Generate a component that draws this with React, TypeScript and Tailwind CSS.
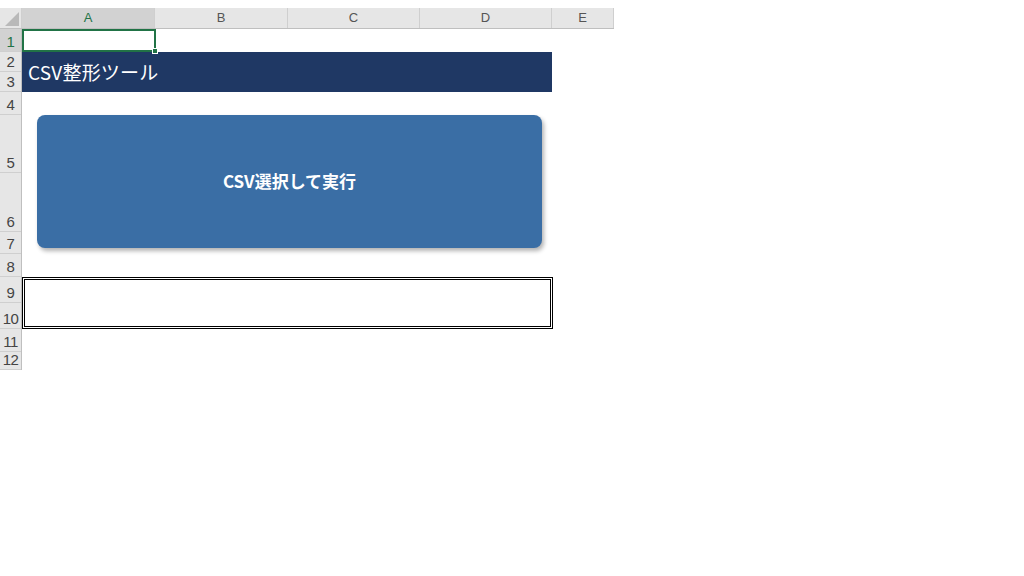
import React from 'react';

const rows = [
  { n: 1, h: 'h-[23px]', active: true },
  { n: 2, h: 'h-[20px]' },
  { n: 3, h: 'h-[20px]' },
  { n: 4, h: 'h-[23px]' },
  { n: 5, h: 'h-[58px]' },
  { n: 6, h: 'h-[59px]' },
  { n: 7, h: 'h-[22px]' },
  { n: 8, h: 'h-[23px]' },
  { n: 9, h: 'h-[26px]' },
  { n: 10, h: 'h-[26px]' },
  { n: 11, h: 'h-[23px]' },
  { n: 12, h: 'h-[18px]' },
];

const cols = [
  { name: 'A', w: 'w-[133px]', active: true },
  { name: 'B', w: 'w-[133px]' },
  { name: 'C', w: 'w-[132px]' },
  { name: 'D', w: 'w-[132px]' },
  { name: 'E', w: 'w-[62px]' },
];

export default function App() {
  return (
    <div className="w-[1024px] h-[576px] bg-white pt-[8px] overflow-hidden font-['Noto_Sans_CJK_JP','Noto_Sans',sans-serif]">
      <div className="w-[614px]">
        {/* column headers */}
        <div className="flex h-[21px] bg-[#e6e6e6] border-b border-[#bfbfbf]">
          <div className="w-[22px] shrink-0 relative border-r border-[#cfcfcf]">
            <svg className="absolute right-[2px] bottom-[2px]" width="14" height="14" viewBox="0 0 14 14">
              <polygon points="14,0 14,14 0,14" fill="#b9b9b9" />
            </svg>
          </div>
          {cols.map((c) => (
            <div
              key={c.name}
              className={`${c.w} shrink-0 flex items-center justify-center text-[13px] font-['Liberation_Sans',sans-serif] border-r border-[#cfcfcf] ${
                c.active ? 'bg-[#d2d2d2] text-[#217346]' : 'text-[#555]'
              }`}
            >
              {c.name}
            </div>
          ))}
        </div>

        <div className="flex">
          {/* row headers */}
          <div className="w-[22px] shrink-0 flex flex-col border-r border-[#bfbfbf]">
            {rows.map((r) => (
              <div
                key={r.n}
                className={`${r.h} shrink-0 flex items-end justify-center pb-[1px] text-[15px] leading-[17px] tracking-[-0.5px] font-['Liberation_Sans',sans-serif] border-b border-[#cfcfcf] ${
                  r.active ? 'bg-[#d2d2d2] text-[#217346]' : 'bg-[#e6e6e6] text-[#444]'
                }`}
              >
                {r.n}
              </div>
            ))}
          </div>

          {/* sheet body */}
          <div className="w-[531px] flex flex-col">
            <div className="h-[23px] relative">
              <div className="w-[134px] h-[23px] border-2 border-[#217346]" />
              <div className="absolute left-[130px] top-[19px] w-[6px] h-[6px] bg-[#217346] border border-white" />
            </div>

            <div className="h-[40px] w-[530px] bg-[#1f3864] flex items-center pl-[6px] text-white text-[19px] tracking-[0.2px]">
              CSV整形ツール
            </div>

            <div className="h-[23px]" />

            <div className="h-[162px] pl-[15px]">
              <button className="w-[505px] h-[133px] rounded-[8px] bg-[#3a6ea5] shadow-[2px_3px_4px_rgba(0,0,0,0.3)] flex items-center justify-center pb-[2px] text-white text-[17px] font-bold">
                CSV選択して実行
              </button>
            </div>

            <div className="h-[52px] w-[531px] border-[3px] border-double border-black" />

            <div className="h-[41px]" />
          </div>
        </div>
      </div>
    </div>
  );
}
